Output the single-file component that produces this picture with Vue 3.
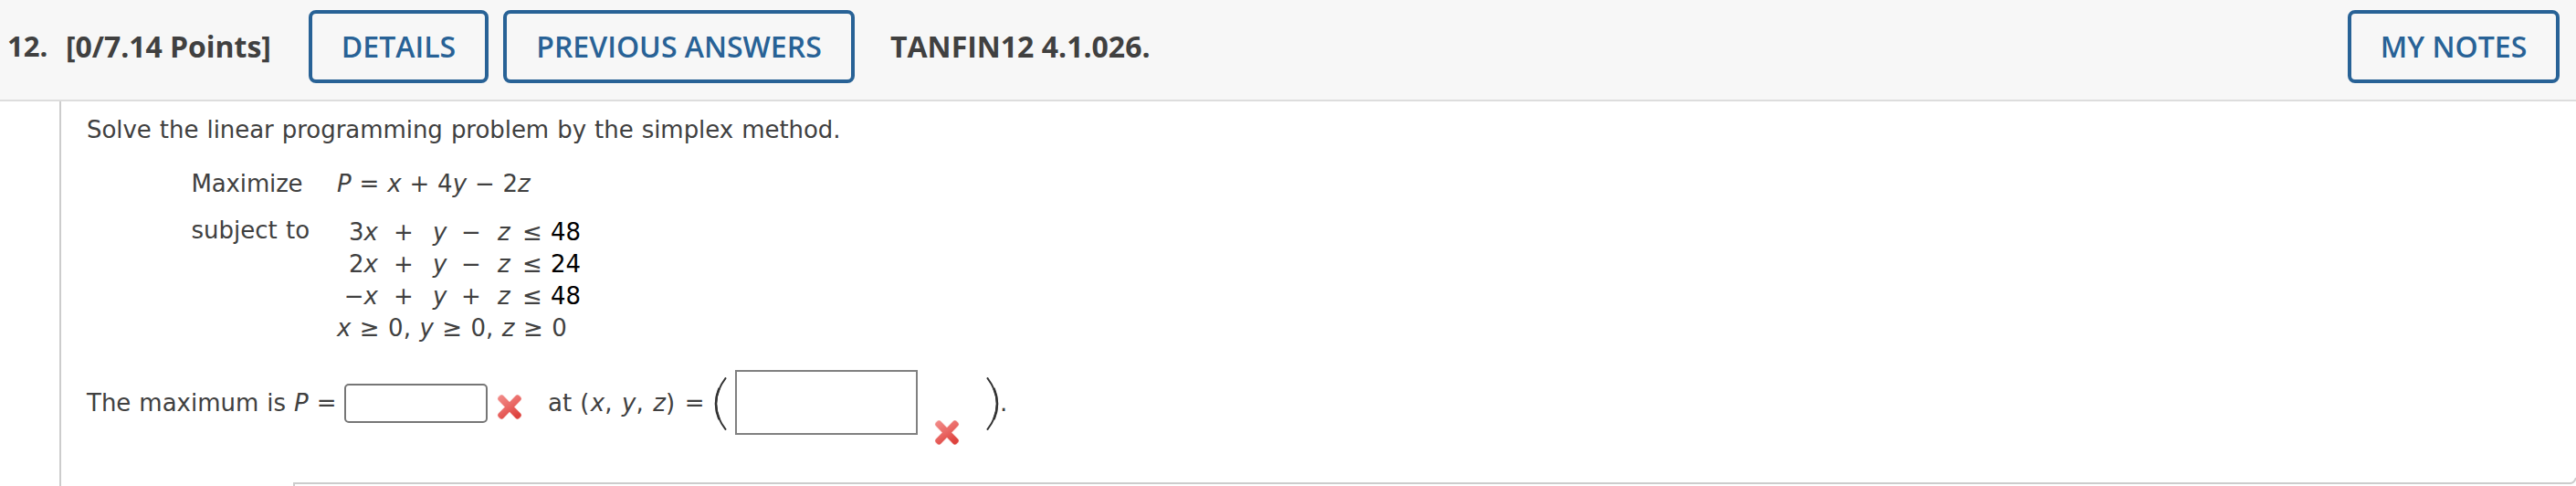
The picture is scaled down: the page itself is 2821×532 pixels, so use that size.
<script setup>
const constraints = [
  { lead: '3', sign: '−', rhs: '48' },
  { lead: '2', sign: '−', rhs: '24' },
  { lead: '−', sign: '+', rhs: '48' },
]
</script>

<template>
  <main class="question">
    <header class="bar">
      <span class="num">12.</span>
      <span class="points">[0/7.14 Points]</span>
      <button class="btn details">DETAILS</button>
      <button class="btn previous">PREVIOUS ANSWERS</button>
      <span class="source">TANFIN12 4.1.026.</span>
      <button class="btn notes">MY NOTES</button>
    </header>
    <section class="body">
      <p class="intro">Solve the linear programming problem by the simplex method.</p>
      <div class="objective">
        <span class="label maximize">Maximize</span>
        <span class="goal"><i>P</i> = <i>x</i> + 4<i>y</i> − 2<i>z</i></span>
      </div>
      <div class="subject">
        <span class="label">subject to</span>
        <div class="system">
          <div v-for="(c, n) in constraints" :key="n" class="row">
            <span class="first">{{ c.lead }}<i>x</i></span>
            <span>+</span>
            <i>y</i>
            <span>{{ c.sign }}</span>
            <i>z</i>
            <span>≤</span>
            <span class="rhs">{{ c.rhs }}</span>
          </div>
          <div class="bounds"><i>x</i> ≥ 0, <i>y</i> ≥ 0, <i>z</i> ≥ 0</div>
        </div>
      </div>
      <div class="answer">
        <span class="max">The maximum is <i>P</i> =</span>
        <input class="small" aria-label="P" />
        <svg class="wrong w1" viewBox="0 0 28 29">
          <defs>
            <linearGradient id="red" x1="0" y1="0" x2="0.6" y2="1">
              <stop offset="0" stop-color="#f28b88" />
              <stop offset="0.55" stop-color="#e9625f" />
              <stop offset="1" stop-color="#dc3a35" />
            </linearGradient>
          </defs>
          <path class="halo" d="M5 5.2 L23 23.8 M23 5.2 L5 23.8" />
          <path class="cross" d="M4 1.8 Q5.5 .8 7 2 L14 9.2 L21 2 Q22.5 .8 24 1.8 L26.3 4 Q27.5 5.4 26.4 6.8 L19 14.5 L26.4 22 Q27.5 23.5 26.3 25 L24 27.2 Q22.5 28.2 21 27 L14 19.8 L7 27 Q5.5 28.2 4 27.2 L1.7 25 Q.5 23.5 1.6 22 L9 14.5 L1.6 6.8 Q.5 5.4 1.7 4 Z" fill="url(#red)" />
        </svg>
        <span class="at">at <b>(</b><i>x</i><b>,</b> <i>y</i><b>,</b> <i>z</i><b>)</b> =</span>
        <svg class="paren open" viewBox="0 0 14 58"><path class="thin" d="M13 .3 Q-9 29 13 57.7" /><path class="thick" d="M5.6 12 Q-1.6 29 5.6 46" /></svg>
        <div class="large"></div>
        <svg class="wrong w2" viewBox="0 0 28 29">
          <path class="halo" d="M5 5.2 L23 23.8 M23 5.2 L5 23.8" />
          <path class="cross" d="M4 1.8 Q5.5 .8 7 2 L14 9.2 L21 2 Q22.5 .8 24 1.8 L26.3 4 Q27.5 5.4 26.4 6.8 L19 14.5 L26.4 22 Q27.5 23.5 26.3 25 L24 27.2 Q22.5 28.2 21 27 L14 19.8 L7 27 Q5.5 28.2 4 27.2 L1.7 25 Q.5 23.5 1.6 22 L9 14.5 L1.6 6.8 Q.5 5.4 1.7 4 Z" fill="url(#red)" />
        </svg>
        <svg class="paren close" viewBox="0 0 14 58"><path class="thin" d="M1 .3 Q23 29 1 57.7" /><path class="thick" d="M8.4 12 Q15.6 29 8.4 46" /></svg>
        <span class="dot">.</span>
      </div>
      <div class="foot">
        <div class="panel"></div>
        <svg class="corner" viewBox="0 0 6 8"><path d="M0 7 Q4 6.5 6 1" /></svg>
      </div>
    </section>
  </main>
</template>

<style>
body { background: #fff; }
</style>

<style scoped>
.question {
  height: 532px;
  overflow: hidden;
  color: #404040;
  font: 26px/36px "DejaVu Sans", Verdana, sans-serif;
  white-space: nowrap;
}
.bar {
  box-sizing: border-box;
  height: 111px;
  padding: 11px 18px 0 8px;
  background: #f7f7f7;
  border-bottom: 2px solid #ddd;
  display: flex;
  align-items: flex-start;
  font: 700 32px/80px "Open Sans", sans-serif;
}
.bar > * { flex: none; }
.num { width: 64px; margin-top: -1px; font-size: 31px; }
.points { width: 266px; letter-spacing: -0.05px; }
.btn {
  box-sizing: border-box;
  height: 80px;
  padding: 0;
  border: 4px solid #286296;
  border-radius: 8px;
  background: transparent;
  color: #286296;
  font: 600 32px/72px "Open Sans", sans-serif;
  text-align: center;
}
.details { width: 197px; margin-right: 16px; }
.previous { width: 385px; margin-right: 39px; }
.notes { width: 232px; margin-left: auto; }
.body {
  box-sizing: border-box;
  height: 421px;
  margin-left: 65px;
  padding: 13px 0 0 28px;
  border-left: 2px solid #ccc;
}
.intro { margin: 0 0 23px; word-spacing: 0.88px; letter-spacing: -0.05px; }
.objective { display: flex; height: 51px; }
.label { box-sizing: border-box; flex: none; width: 160px; margin-left: 114px; padding-left: 0.5px; word-spacing: 1px; }
.maximize { letter-spacing: -0.15px; }
.goal { word-spacing: 0.6px; }
.subject { display: flex; }
.system { padding-top: 2px; }
.row {
  display: grid;
  grid-template-columns: 62px 43px 31px 40px 27px 31px 40px;
  height: 35px;
}
.first { width: 45px; text-align: right; }
.rhs { color: #000; }
.bounds { word-spacing: 1.2px; }
.answer { display: flex; align-items: flex-start; height: 124px; margin-top: 27px; }
.answer > * { flex: none; }
.max { width: 282px; margin-top: 19px; word-spacing: 0.7px; }
.small {
  box-sizing: border-box;
  width: 157px;
  height: 43px;
  margin-top: 16px;
  padding: 0;
  border: 2px solid #767676;
  border-radius: 5px;
  background: #fff;
}
.wrong { width: 28px; height: 29px; }
.w1 { margin: 27px 0 0 10px; }
.w2 { margin: 55px 0 0 18px; }
.halo { stroke: #f7c4c2; stroke-width: 8.5; stroke-linecap: round; opacity: .5; }
.cross { opacity: .95; }
.at { width: 182px; margin: 19px 0 0 28px; word-spacing: 0.9px; }
.at b { font-weight: 400; letter-spacing: 1.4px; }
.paren { width: 14px; height: 58px; margin-top: 9px; fill: none; stroke: #333; }
.thin { stroke-width: 1.9; }
.thick { stroke-width: 2.6; }
.large { box-sizing: border-box; width: 200px; height: 71px; border: 2px solid #808080; margin: 1px 0 0 9px; }
.close { margin-left: 29px; }
.dot { margin: 19px 0 0 1px; }
.foot { display: flex; align-items: flex-start; margin-top: -6px; }
.panel { flex: 1; height: 20px; margin: 6px 0 0 226px; border: 2px solid #ccc; border-width: 2px 0 0 2px; }
.corner { width: 6px; height: 8px; }
.corner path { fill: none; stroke: #ccc; stroke-width: 2; }
</style>
